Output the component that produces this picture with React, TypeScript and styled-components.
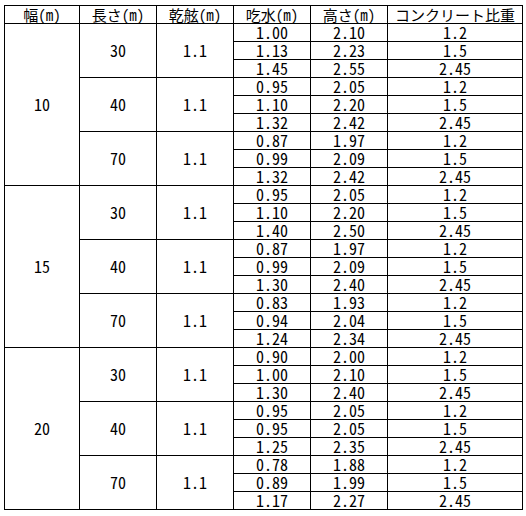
import React from "react";
import styled, { createGlobalStyle } from "styled-components";

const GlobalStyle = createGlobalStyle`
  html, body {
    margin: 0;
    padding: 0;
    background: #ffffff;
  }
`;

type Row = { draft: string; height: string };
type LengthGroup = { length: string; rows: Row[] };
type WidthGroup = { width: string; lengths: LengthGroup[] };

const GRAVITY = ["1.2", "1.5", "2.45"];
const FREEBOARD = "1.1";

const r = (draft: string, height: string): Row => ({ draft, height });

const data: WidthGroup[] = [
  {
    width: "10",
    lengths: [
      { length: "30", rows: [r("1.00", "2.10"), r("1.13", "2.23"), r("1.45", "2.55")] },
      { length: "40", rows: [r("0.95", "2.05"), r("1.10", "2.20"), r("1.32", "2.42")] },
      { length: "70", rows: [r("0.87", "1.97"), r("0.99", "2.09"), r("1.32", "2.42")] },
    ],
  },
  {
    width: "15",
    lengths: [
      { length: "30", rows: [r("0.95", "2.05"), r("1.10", "2.20"), r("1.40", "2.50")] },
      { length: "40", rows: [r("0.87", "1.97"), r("0.99", "2.09"), r("1.30", "2.40")] },
      { length: "70", rows: [r("0.83", "1.93"), r("0.94", "2.04"), r("1.24", "2.34")] },
    ],
  },
  {
    width: "20",
    lengths: [
      { length: "30", rows: [r("0.90", "2.00"), r("1.00", "2.10"), r("1.30", "2.40")] },
      { length: "40", rows: [r("0.95", "2.05"), r("0.95", "2.05"), r("1.25", "2.35")] },
      { length: "70", rows: [r("0.78", "1.88"), r("0.89", "1.99"), r("1.17", "2.27")] },
    ],
  },
];

const Page = styled.div`
  padding: 5px 0 0 4px;
`;

const Table = styled.table`
  border-collapse: collapse;
  table-layout: fixed;
  width: 518px;
  font-family: "Noto Sans Mono CJK JP", "Noto Sans CJK JP", "DejaVu Sans Mono", monospace;
  font-size: 16px;
  color: #000000;
`;

const HeadCell = styled.th`
  height: 17px;
  padding: 0;
  border: 1px solid #000000;
  font-weight: normal;
  font-size: 15px;
  line-height: 17px;
  text-align: center;
  vertical-align: middle;
  white-space: nowrap;
  overflow: hidden;
`;

const Cell = styled.td`
  height: 17px;
  padding: 0;
  border: 1px solid #000000;
  line-height: 17px;
  text-align: center;
  vertical-align: middle;
  white-space: nowrap;
`;

const columns = [75, 77, 77, 77, 77, 135];
const headers = ["幅(m)", "長さ(m)", "乾舷(m)", "吃水(m)", "高さ(m)", "コンクリート比重"];

export default function App() {
  return (
    <>
      <GlobalStyle />
      <Page>
        <Table>
          <colgroup>
            {columns.map((w, i) => (
              <col key={i} style={{ width: w }} />
            ))}
          </colgroup>
          <thead>
            <tr>
              {headers.map((h) => (
                <HeadCell key={h}>{h}</HeadCell>
              ))}
            </tr>
          </thead>
          <tbody>
            {data.map((group) =>
              group.lengths.map((lg, li) =>
                lg.rows.map((row, ri) => (
                  <tr key={`${group.width}-${lg.length}-${ri}`}>
                    {li === 0 && ri === 0 && <Cell rowSpan={9}>{group.width}</Cell>}
                    {ri === 0 && <Cell rowSpan={3}>{lg.length}</Cell>}
                    {ri === 0 && <Cell rowSpan={3}>{FREEBOARD}</Cell>}
                    <Cell>{row.draft}</Cell>
                    <Cell>{row.height}</Cell>
                    <Cell>{GRAVITY[ri]}</Cell>
                  </tr>
                ))
              )
            )}
          </tbody>
        </Table>
      </Page>
    </>
  );
}
